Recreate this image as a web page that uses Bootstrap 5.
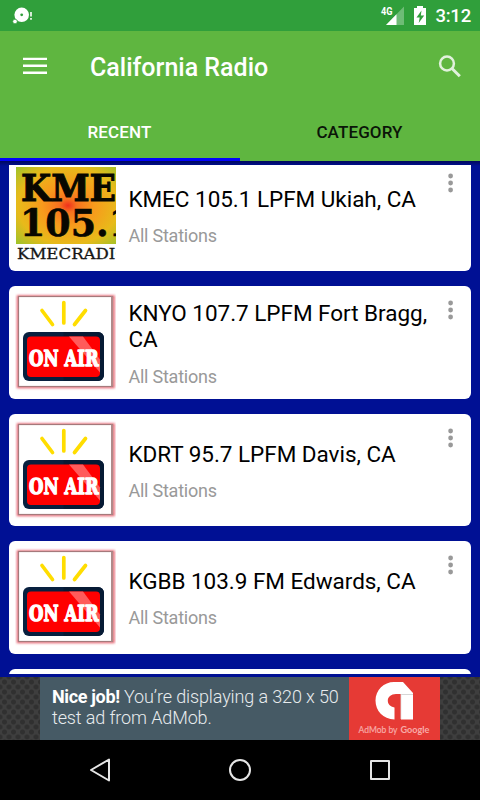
<!DOCTYPE html>
<html lang="en">
<head>
<meta charset="utf-8">
<meta name="viewport" content="width=device-width, initial-scale=1">
<title>California Radio</title>
<link href="https://cdn.jsdelivr.net/npm/bootstrap@5.3.0/dist/css/bootstrap.min.css" rel="stylesheet">
<style>
body{font-family:Roboto,"Liberation Sans",sans-serif;background:#000;width:480px;height:800px;line-height:1.2}
svg{display:block;flex:none}
.status{height:31px;background:#309f3b;color:#fff}
.status-end{padding-right:9px}
.clock{font-size:18.5px;font-weight:500;line-height:33px;letter-spacing:-.2px}
.appbar{height:130px;background:#5fb640}
.tools{height:70px;padding:0 18px 0 23px}
.app-title{font-size:25px;font-weight:500;color:#fff;margin-left:43px;line-height:30px;padding-top:4px}
.tab-item{font-size:17px;font-weight:500;line-height:20px;height:60px;padding-top:21px;color:#0b1508;border-bottom:3.5px solid transparent}
.tab-item.on{color:#fff;border-bottom-color:#0202fb}
.tab-item span{letter-spacing:.12px;margin-left:-1px}
.stations{height:516px;background:#001094 linear-gradient(#00085c,#001094) 0 0/100% 5px no-repeat;padding:4px 9px 3px}
.clip-area{height:509px}
.station{height:112.5px;border-radius:6px;margin-bottom:15px;background:#fff;padding:0 13px 0 6px}
.clip-area>.station:first-child{margin-top:-6.5px}
.station-name{font-size:22.5px;line-height:26.4px;color:#000;margin-top:2px;letter-spacing:-.03px;white-space:nowrap}
.station-sub{font-size:18px;line-height:21px;color:#999;margin-top:13px;letter-spacing:-.22px}
.station-text{padding-left:12.4px}
.more{margin-top:14px}
.ad{height:63px;background-color:#3e3e3e;background-image:radial-gradient(circle,#303030 2px,transparent 3px),radial-gradient(circle,#303030 2px,transparent 3px);background-size:9px 10px;background-position:0 0,4.5px 5px}
.ad-body{width:400px;background:#465a65}
.ad-text{width:309px;padding:9px 0 0 12px;font-size:18px;line-height:21px;color:#e8ecee;font-weight:300;letter-spacing:-.12px}
.ad-text b{font-weight:700;color:#fff;letter-spacing:-.35px}
.ad-logo{width:91px;background:#e63a35}
.sysnav{height:60px;background:#000}
</style>
</head>
<body class="overflow-hidden d-flex flex-column">
<svg width="0" height="0" class="position-absolute" aria-hidden="true">
<defs>
<radialGradient id="glow" cx=".52" cy=".5" r=".74"><stop offset="0" stop-color="#f0301c"/><stop offset=".12" stop-color="#f7721f"/><stop offset=".35" stop-color="#f79a1c"/><stop offset=".68" stop-color="#e8ba1a"/><stop offset="1" stop-color="#95c42c"/></radialGradient>
<filter id="soft" x="-5%" y="-5%" width="110%" height="110%"><feGaussianBlur stdDeviation=".8"/></filter>
<symbol id="onair" viewBox="0 0 101 100">
<path d="M3 95h95.500V4.500H3z" fill="none" stroke="#e2384a" stroke-opacity=".75" stroke-width="2.600" filter="url(#soft)"/>
<rect x="3.500" y="4.500" width="94" height="90" fill="#fff" stroke="#a5797b" stroke-width="1.200"/>
<path d="M97 4.500v90" stroke="#b08a8a" stroke-width="2"/>
<path d="M27 18.500l10.500 14M48.800 10.500v20.500M70.500 18.500L59.500 32.500" stroke="#fd0" stroke-width="3.700" stroke-linecap="round"/>
<rect x="8" y="40" width="81" height="49" rx="6" fill="#08203f"/>
<path d="M48.500 40H83a6 6 0 0 1 6 6v37a6 6 0 0 1-6 6H48.500z" fill="#061a34"/>
<rect x="12" y="44.500" width="73" height="40.500" rx="4" fill="#f00"/>
<path d="M54 44.500h14l17 23v13z" fill="#ff5b5b"/>
<g font-family="DejaVu Serif" font-weight="700" font-size="22.500" fill="#fff" stroke="#fff" stroke-width="1.500" stroke-linejoin="round"><text x="14" y="73.500" textLength="29.500" lengthAdjust="spacingAndGlyphs">ON</text><text x="49.500" y="73.500" textLength="34" lengthAdjust="spacingAndGlyphs">AIR</text></g>
</symbol>
<symbol id="dots" viewBox="0 0 14 22"><g fill="#999"><circle cx="6.600" cy="3" r="2.400"/><circle cx="6.600" cy="10" r="2.400"/><circle cx="6.600" cy="17" r="2.400"/></g></symbol>
</defs>
</svg>

<header>
<div class="status d-flex justify-content-between">
<svg width="40" height="31" viewBox="0 0 40 31"><circle cx="21.700" cy="14.800" r="7.300" fill="#fff"/><circle cx="15" cy="21.500" r="2.300" fill="#fff" stroke="#309f3b" stroke-width=".7"/><circle cx="21.700" cy="14.800" r="1.400" fill="#309f3b"/><path d="M31 12v4.500M31 18v1.800" stroke="#fff" stroke-width="1.600"/></svg>
<div class="status-end d-flex">
<svg width="55" height="31" viewBox="381 0 55 31"><text x="382" y="14.800" textLength="11.500" lengthAdjust="spacingAndGlyphs" font-family="Roboto" font-weight="700" font-size="11" fill="#fff">4G</text><path d="M387 25l18-18.500V25z" fill="#fff" opacity=".3"/><path d="M387 25l10.500-10.800V25z" fill="#fff"/><path d="M415 8h3V6h6v2h3v17h-12z" fill="#fff"/><path d="M422.500 10.500l-5 7h3.200l-1 5.500 5.500-7.500h-3.400z" fill="#309f3b"/></svg>
<span class="clock">3:12</span>
</div>
</div>
<div class="appbar">
<div class="tools d-flex align-items-center">
<svg width="24" height="18" viewBox="0 0 24 18"><path d="M0 1.900h24M0 8.800h24M0 15.800h24" stroke="#fff" stroke-width="2.400"/></svg>
<h1 class="app-title mb-0">California Radio</h1>
<svg class="ms-auto" width="25" height="25" viewBox="0 0 25 25"><circle cx="10" cy="9.500" r="6.900" fill="none" stroke="#e1f1dc" stroke-width="2.500"/><path d="M15 14.500l7.800 7.800" stroke="#e1f1dc" stroke-width="3"/></svg>
</div>
<nav class="row g-0 text-center">
<div class="col-6 tab-item on"><span>RECENT</span></div>
<div class="col-6 tab-item"><span>CATEGORY</span></div>
</nav>
</div>
</header>

<main class="stations">
<div class="clip-area overflow-hidden">
<article class="station d-flex align-items-center">
<svg width="101" height="100" viewBox="0 0 101 100"><rect x="1" y="2" width="100" height="77" fill="url(#glow)"/><g font-family="DejaVu Serif" font-weight="700" fill="#080700" stroke="#080700"><text x="6" y="36" font-size="38" textLength="95" lengthAdjust="spacingAndGlyphs">KME</text><text x="5" y="71" font-size="38" textLength="114" lengthAdjust="spacingAndGlyphs" stroke-width=".6">105.1</text></g><text x="2" y="94" font-family="DejaVu Serif" font-size="14" textLength="112" lengthAdjust="spacingAndGlyphs" fill="#161616" stroke="#161616" stroke-width=".3">KMECRADIO</text></svg>
<div class="station-text flex-grow-1"><div class="station-name">KMEC 105.1 LPFM Ukiah, CA</div><div class="station-sub">All Stations</div></div>
<svg class="more align-self-start" width="14" height="22"><use href="#dots"/></svg>
</article>
<article class="station d-flex align-items-center">
<svg width="101" height="100"><use href="#onair"/></svg>
<div class="station-text flex-grow-1"><div class="station-name">KNYO 107.7 LPFM Fort Bragg,<br>CA</div><div class="station-sub">All Stations</div></div>
<svg class="more align-self-start" width="14" height="22"><use href="#dots"/></svg>
</article>
<article class="station d-flex align-items-center">
<svg width="101" height="100"><use href="#onair"/></svg>
<div class="station-text flex-grow-1"><div class="station-name">KDRT 95.7 LPFM Davis, CA</div><div class="station-sub">All Stations</div></div>
<svg class="more align-self-start" width="14" height="22"><use href="#dots"/></svg>
</article>
<article class="station d-flex align-items-center">
<svg width="101" height="100"><use href="#onair"/></svg>
<div class="station-text flex-grow-1"><div class="station-name">KGBB 103.9 FM Edwards, CA</div><div class="station-sub">All Stations</div></div>
<svg class="more align-self-start" width="14" height="22"><use href="#dots"/></svg>
</article>
<article class="station"></article>
</div>
</main>

<aside class="ad d-flex justify-content-center">
<div class="ad-body d-flex">
<div class="ad-text text-nowrap"><b>Nice job!</b> You’re displaying a 320 x 50<br>test ad from AdMob.</div>
<div class="ad-logo"><svg width="91" height="63" viewBox="349 677 91 63"><path d="M394.500 719.500C383 719 375.500 711 375.500 700.500C375.500 690 384 682 394 682H403L413 693V719.500H401V694H396C391 694 387.800 697 387.800 700.500C387.800 704 390 706.500 394.500 707.500z" fill="#fff"/><path d="M401 694.500h12" stroke="#ccc" stroke-width=".8"/><path d="M401 694v25" stroke="#e3e3e3" stroke-width=".8"/><g font-family="Lato" font-size="10" fill="#f8aaa7"><text x="358.500" y="732.500" textLength="39" lengthAdjust="spacingAndGlyphs" stroke="#f8aaa7" stroke-width=".2">AdMob by</text><text x="400.500" y="732.500" textLength="29" lengthAdjust="spacingAndGlyphs" font-weight="700">Google</text></g></svg></div>
</div>
</aside>

<footer class="sysnav">
<svg width="480" height="60" viewBox="0 0 480 60" fill="none" stroke="#e6e6e6" stroke-width="2" stroke-linejoin="round"><path d="M91 30l18-10.500v21z"/><circle cx="240" cy="30" r="10"/><path d="M371 21h18v18h-18z"/></svg>
</footer>
<script src="https://cdn.jsdelivr.net/npm/bootstrap@5.3.0/dist/js/bootstrap.bundle.min.js"></script>
</body>
</html>
